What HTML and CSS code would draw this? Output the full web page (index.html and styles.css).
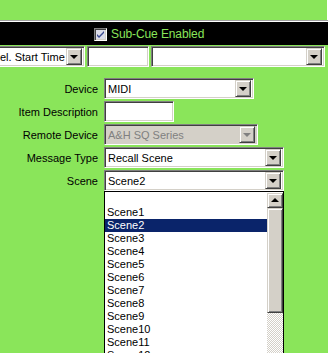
FILE: index.html
```html
<!DOCTYPE html>
<html>
<head>
<meta charset="utf-8">
<link rel="stylesheet" href="styles.css">
</head>
<body>
<div class="page">
  <div class="top"></div>
  <div class="sep"></div>
  <div class="band">
    <span class="check">
      <svg width="9" height="9" viewBox="0 0 9 9"><path d="M1 4 L3 6 L8 1 L8 3 L3 8 L1 6 Z" fill="#3a4a90"/></svg>
    </span>
    <span class="band-label">Sub-Cue Enabled</span>
  </div>
  <div class="toprow">
    <div class="combo c-start noleft"><span class="txt">el. Start Time</span><span class="btn"><i class="tri"></i></span></div>
    <div class="edit c-mid"></div>
    <div class="combo c-wide"><span class="txt"></span><span class="btn"><i class="tri"></i></span></div>
  </div>
  <div class="form">
    <label>Device</label>
    <div class="combo w150"><span class="txt">MIDI</span><span class="btn"><i class="tri"></i></span></div>
    <label>Item Description</label>
    <div class="edit w70"></div>
    <label>Remote Device</label>
    <div class="combo w154 disabled"><span class="txt">A&amp;H SQ Series</span><span class="btn"><i class="tri"></i></span></div>
    <label>Message Type</label>
    <div class="combo w180"><span class="txt">Recall Scene</span><span class="btn"><i class="tri"></i></span></div>
    <label>Scene</label>
    <div class="combo w180"><span class="txt">Scene2</span><span class="btn"><i class="tri"></i></span></div>
    <span class="spacer"></span>
    <div class="list">
      <ul class="items">
        <li>&nbsp;</li>
        <li>Scene1</li>
        <li class="sel">Scene2</li>
        <li>Scene3</li>
        <li>Scene4</li>
        <li>Scene5</li>
        <li>Scene6</li>
        <li>Scene7</li>
        <li>Scene8</li>
        <li>Scene9</li>
        <li>Scene10</li>
        <li>Scene11</li>
        <li>Scene12</li>
      </ul>
      <div class="sbar">
        <span class="sbtn"><i class="tri up"></i></span>
        <span class="thumb"></span>
        <span class="track"></span>
      </div>
    </div>
  </div>
</div>
</body>
</html>
```
FILE: styles.css
```css
* { box-sizing: border-box; }
html, body { margin: 0; padding: 0; }
body {
  background: #8ae55a;
  font-family: "Liberation Sans", Arial, sans-serif;
  font-size: 11px;
  color: #000;
}
.page { width: 328px; height: 353px; overflow: hidden; }
.top { height: 20px; border-right: 1px solid #fff; }
.sep { height: 2px; border-top: 1px solid #a0a0a0; border-bottom: 1px solid #fff; }
.band {
  height: 23px;
  background: #000;
  display: flex;
  align-items: center;
  padding-left: 94px;
  gap: 4px;
}
.check {
  width: 13px; height: 13px;
  background: #dcdce8;
  border: 1px solid; border-color: #808080 #fff #fff #808080;
  box-shadow: inset 1px 1px #404040, inset -1px -1px #d4d0c8;
  display: flex; align-items: center; justify-content: center;
  margin-top: 1px;
}
.band-label { color: #8ae55a; font-size: 12px; letter-spacing: -0.1px; }
.toprow {
  display: flex;
  margin-top: 1px;
  height: 21px;
  gap: 2px;
}
.combo, .edit {
  height: 21px;
  background: #fff;
  border: 1px solid; border-color: #808080 #fff #fff #808080;
  box-shadow: inset 1px 1px #404040, inset -1px -1px #d4d0c8;
  display: flex; align-items: center;
  padding: 2px 2px 2px 3px;
}
.combo .txt { flex: 1; white-space: nowrap; overflow: hidden; }
.btn {
  width: 16px; height: 17px;
  background: #d4d0c8;
  border: 1px solid; border-color: #d4d0c8 #404040 #404040 #d4d0c8;
  box-shadow: inset 1px 1px #fff, inset -1px -1px #808080;
  display: flex; align-items: center; justify-content: center;
}
.tri {
  width: 0; height: 0;
  border-left: 4px solid transparent;
  border-right: 4px solid transparent;
  border-top: 4px solid #000;
  margin-top: 1px;
}
.tri.up { border-top: 0; border-bottom: 4px solid #000; margin-top: -1px; }
.noleft { border-left: 0; box-shadow: inset 0 1px #404040, inset -1px -1px #d4d0c8; padding-left: 0; }
.c-start { width: 85px; }
.c-mid { width: 62px; }
.c-wide { width: 174px; }
.form {
  margin-top: 11px;
  display: grid;
  grid-template-columns: 98px auto;
  column-gap: 6px;
  row-gap: 2px;
  justify-items: start;
}
.form label { justify-self: end; align-self: center; white-space: nowrap; }
.w150 { width: 150px; }
.w70 { width: 70px; }
.w154 { width: 154px; }
.w180 { width: 180px; }
.disabled { background: #d4d0c8; color: #808080; }
.disabled .tri { border-top-color: #808080; }
.spacer { height: 0; }
.list {
  margin-top: -2px;
  width: 180px;
  height: 170px;
  background: #fff;
  border: 1px solid #000;
  display: flex;
}
.items { list-style: none; margin: 0; padding: 1px 0 0 0; flex: 1; }
.items li { height: 13px; line-height: 13px; padding-left: 2px; white-space: nowrap; }
.items li.sel { background: #0a246a; color: #fff; }
.sbar { width: 16px; display: flex; flex-direction: column; padding-top: 1px; }
.sbtn, .thumb {
  background: #d4d0c8;
  border: 1px solid; border-color: #d4d0c8 #404040 #404040 #d4d0c8;
  box-shadow: inset 1px 1px #fff, inset -1px -1px #808080;
}
.sbtn { height: 15px; display: flex; align-items: center; justify-content: center; }
.thumb { height: 105px; }
.track {
  flex: 1;
  background: repeating-conic-gradient(#d4d0c8 0 25%, #fff 0 50%) 0 0 / 2px 2px;
}
```
